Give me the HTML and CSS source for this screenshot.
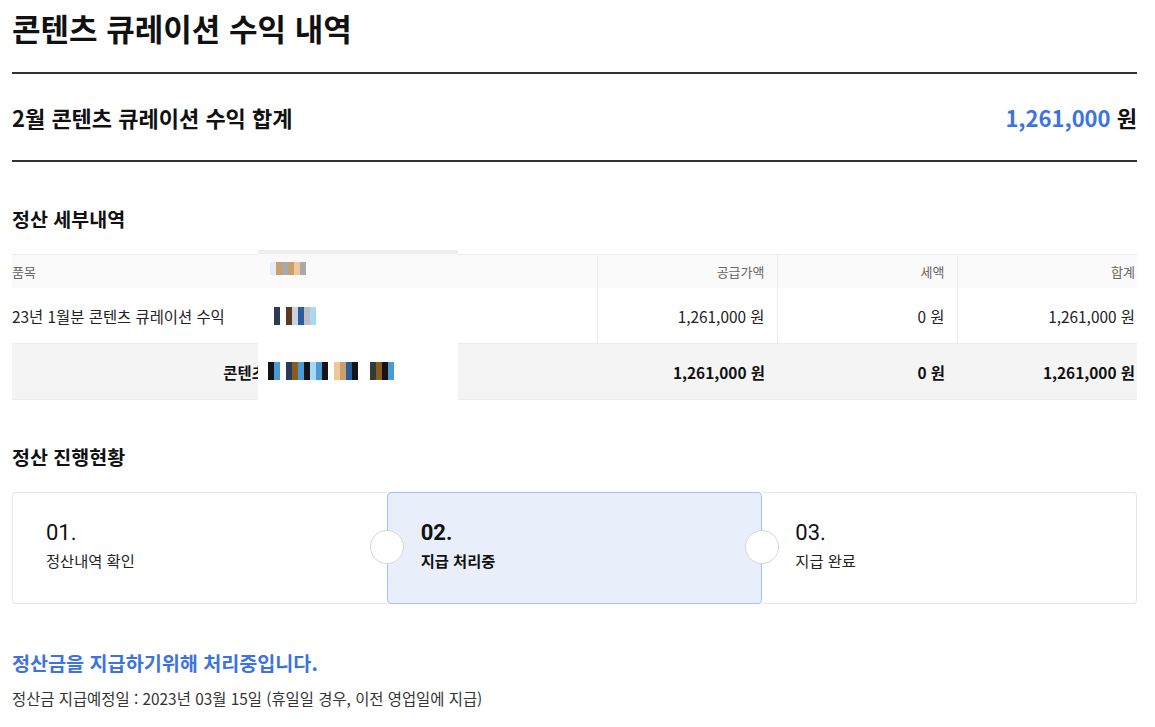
FILE: index.html
```html
<!DOCTYPE html>
<html lang="ko">
<head>
  <meta charset="UTF-8">
  <title>콘텐츠 큐레이션 수익 내역</title>
  <link rel="stylesheet" href="styles.css">
</head>
<body>
  <div class="page">
    <h1 class="title">콘텐츠 큐레이션 수익 내역</h1>

    <div class="summary">
      <h2>2월 콘텐츠 큐레이션 수익 합계</h2>
      <p class="summary-amount"><span class="blue">1,261,000</span> 원</p>
    </div>

    <h3 class="section-title">정산 세부내역</h3>
    <div class="table-wrap">
      <table class="detail">
        <colgroup>
          <col class="c-item">
          <col class="c-name">
          <col class="c-num">
          <col class="c-num">
          <col class="c-num">
        </colgroup>
        <thead>
          <tr>
            <th class="left">품목</th>
            <th class="left"></th>
            <th>공급가액</th>
            <th>세액</th>
            <th>합계</th>
          </tr>
        </thead>
        <tbody>
          <tr>
            <td class="left">23년 1월분 콘텐츠 큐레이션 수익</td>
            <td class="left"></td>
            <td>1,261,000 원</td>
            <td>0 원</td>
            <td>1,261,000 원</td>
          </tr>
        </tbody>
        <tfoot>
          <tr>
            <td colspan="2" class="total-label">콘텐츠 큐레이션 수익 합계</td>
            <td>1,261,000 원</td>
            <td>0 원</td>
            <td>1,261,000 원</td>
          </tr>
        </tfoot>
      </table>

      <!-- redacted area -->
      <div class="mosaic">
        <div class="mz mz-head">
          <i class="p1"></i><i class="p2"></i><i class="p3"></i><i class="p2"></i><i class="p4"></i><i class="p3"></i>
        </div>
        <div class="mz mz-row">
          <i class="p5"></i><i class="p6"></i><i class="p7"></i><i class="p8"></i><i class="p9"></i><i class="p10"></i><i class="p11"></i>
        </div>
        <div class="mz mz-total">
          <i class="p6"></i><i class="p12"></i><i class="p13"></i><i class="p6"></i><i class="p5"></i><i class="p15"></i><i class="p13"></i><i class="p12"></i><i class="p11"></i><i class="p13"></i><i class="p12"></i><i class="p6"></i><i class="p4"></i><i class="p2"></i><i class="p9"></i><i class="p12"></i><i class="p6"></i><i class="p6"></i><i class="p14"></i><i class="p15"></i><i class="p12"></i><i class="p13"></i>
        </div>
      </div>
    </div>

    <h3 class="section-title">정산 진행현황</h3>
    <div class="steps">
      <div class="step">
        <div class="step-no">01.</div>
        <div class="step-name">정산내역 확인</div>
      </div>
      <div class="step active">
        <span class="dot dot-left"></span>
        <div class="step-no">02.</div>
        <div class="step-name">지급 처리중</div>
        <span class="dot dot-right"></span>
      </div>
      <div class="step">
        <div class="step-no">03.</div>
        <div class="step-name">지급 완료</div>
      </div>
    </div>

    <p class="status">정산금을 지급하기위해 처리중입니다.</p>
    <p class="status-sub">정산금 지급예정일 : 2023년 03월 15일 (휴일일 경우, 이전 영업일에 지급)</p>
  </div>
</body>
</html>
```

FILE: styles.css
```css
/* Page */
body {
  margin: 0;
  font-family: "Noto Sans CJK KR", "Noto Sans", sans-serif;
  color: #111;
  background-color: #fff;
}

.page {
  width: 1125px;
  padding: 0 18px 0 12px;
}

.title {
  margin: 0;
  padding: 7px 0 23px;
  font-size: 31px;
  font-weight: 700;
  line-height: 42px;
  border-bottom: 2px solid #333;
}

/* Monthly summary */
.summary {
  display: flex;
  justify-content: space-between;
  align-items: center;
  height: 86px;
  border-bottom: 2px solid #333;
}

.summary h2 {
  margin: 0;
  font-size: 22px;
  font-weight: 700;
}

.summary-amount {
  margin: 0;
  font-size: 22px;
  font-weight: 700;
}

.blue {
  color: #3b73e3;
}

.section-title {
  margin: 0;
  font-size: 19.5px;
  font-weight: 700;
  line-height: 26px;
}

.summary + .section-title {
  margin-top: 44px;
}

/* Detail table */
.table-wrap {
  position: relative;
  margin-top: 22px;
  margin-bottom: 44px;
}

.detail {
  width: 100%;
  border-collapse: collapse;
  table-layout: fixed;
}

.c-item { width: 246px; }
.c-name { width: 339px; }
.c-num { width: 180px; }

.detail th,
.detail td {
  text-align: right;
  padding: 0 12px 0 0;
  border-left: 1px solid #ececec;
}

.detail th:last-child,
.detail td:last-child {
  padding-right: 2px;
}

.detail th:first-child,
.detail td:first-child,
.detail th:nth-child(2),
.detail td:nth-child(2) {
  border-left: none;
}

.detail .left {
  text-align: left;
}

.detail thead tr {
  border-top: 1px solid #ececec;
}

.detail th {
  height: 33px;
  font-size: 13px;
  font-weight: 400;
  color: #666;
  background-color: #fafafa;
}

.detail tbody td {
  height: 55px;
  font-size: 15.4px;
  color: #222;
  border-bottom: 1px solid #ececec;
}

.detail tfoot td {
  height: 55px;
  font-size: 15.4px;
  font-weight: 700;
  background-color: #f4f4f4;
  border-left: none;
  border-bottom: 1px solid #ececec;
}

.detail tfoot .total-label {
  padding-right: 205px;
}

/* blurred-out block over the second column */
.mosaic {
  position: absolute;
  left: 246px;
  top: -4px;
  width: 200px;
  height: 146px;
  background-color: #fff;
  border-top: 4px solid #eeeeee;
}

.mosaic::before {
  content: "";
  position: absolute;
  left: 0;
  right: 0;
  top: 0;
  height: 34px;
  background-color: #fafafa;
}

.mz {
  position: absolute;
  display: flex;
}

.mz i {
  display: block;
  width: 6px;
  height: 13px;
}

.mz-head {
  left: 12px;
  top: 8px;
}

.mz-row {
  left: 16px;
  top: 53px;
}

.mz-row i {
  height: 18px;
}

.mz-total {
  left: 4px;
  top: 108px;
}

.mz-total i {
  height: 18px;
}

.p1 { background: #e3ecf7; }
.p2 { background: #c99f72; }
.p3 { background: #a9a9a9; }
.p4 { background: #eec899; }
.p5 { background: #2b3a55; }
.p6 { background: #ffffff; }
.p7 { background: #5a3a22; }
.p8 { background: #cbd3e0; }
.p9 { background: #2c5d9b; }
.p10 { background: #bfbfbf; }
.p11 { background: #a8d8f8; }
.p12 { background: #151515; }
.p13 { background: #4a9ad8; }
.p14 { background: #333a3a; }
.p15 { background: #8b5a1e; }

/* Progress steps */
.steps {
  display: flex;
  margin-top: 22px;
  height: 112px;
}

.step {
  position: relative;
  flex: 1;
  padding: 24px 0 0 33px;
  border: 1px solid #e6e6e6;
  border-radius: 4px;
}

.step:first-child {
  border-right: none;
  border-radius: 4px 0 0 4px;
}

.step:last-child {
  border-left: none;
  border-radius: 0 4px 4px 0;
}

.step.active {
  background-color: #e8effb;
  border-color: #a3bff0;
}

.step-no {
  font-family: Roboto, "Noto Sans", sans-serif;
  font-size: 22px;
  line-height: 32px;
  color: #111;
}

.step-name {
  margin-top: 0;
  font-size: 15.3px;
  color: #222;
}

.step.active .step-no,
.step.active .step-name {
  font-weight: 700;
  color: #111;
}

.dot {
  position: absolute;
  top: 37px;
  width: 32px;
  height: 32px;
  border-radius: 50%;
  background-color: #fff;
  border: 1px solid #d6d6d6;
}

.dot-left {
  left: -18px;
}

.dot-right {
  right: -18px;
}

/* Status messages */
.status {
  margin: 44px 0 0;
  font-size: 19.6px;
  font-weight: 700;
  color: #3b73e3;
}

.status-sub {
  margin: 10px 0 0;
  font-size: 15.4px;
  color: #333;
}
```
